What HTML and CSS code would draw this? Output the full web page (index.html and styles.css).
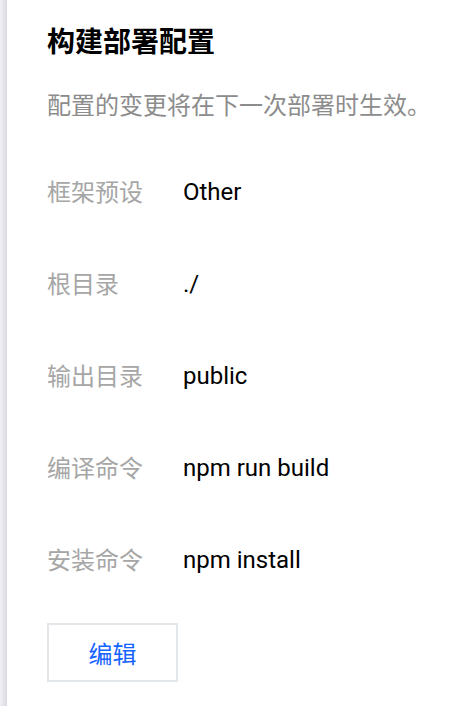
FILE: index.html
```html
<!DOCTYPE html>
<html lang="zh-CN">
<head>
    <meta charset="UTF-8">
    <meta name="viewport" content="width=device-width, initial-scale=1.0">
    <title>构建部署配置</title>
    <link rel="stylesheet" href="styles.css">
</head>
<body>
    <div class="layout">
        <div class="edge"></div>
        <div class="panel">
            <h1>构建部署配置</h1>
            <p class="desc">配置的变更将在下一次部署时生效。</p>

            <div class="config-list">
                <div class="config-row">
                    <div class="config-label">框架预设</div>
                    <div class="config-value">Other</div>
                </div>
                <div class="config-row">
                    <div class="config-label">根目录</div>
                    <div class="config-value">./</div>
                </div>
                <div class="config-row">
                    <div class="config-label">输出目录</div>
                    <div class="config-value">public</div>
                </div>
                <div class="config-row">
                    <div class="config-label">编译命令</div>
                    <div class="config-value">npm run build</div>
                </div>
                <div class="config-row">
                    <div class="config-label">安装命令</div>
                    <div class="config-value">npm install</div>
                </div>
            </div>

            <button class="edit-btn">编辑</button>
        </div>
    </div>
</body>
</html>
```

FILE: styles.css
```css
body {
    font-family: Roboto, "Noto Sans CJK SC", sans-serif;
    margin: 0;
    padding: 0;
    background-color: #fff;
    color: #000;
}
.layout {
    display: flex;
    min-height: 706px;
}
.edge {
    width: 7px;
    flex-shrink: 0;
    background: linear-gradient(to right, #f0f0f5, #d9d9e1);
}
.panel {
    flex: 1;
    padding: 23px 0 0 40px;
}
h1 {
    margin: 0;
    font-size: 28px;
    line-height: 40px;
    font-weight: bold;
    color: #000;
}
.desc {
    margin: 23px 0 0;
    font-size: 24px;
    line-height: 40px;
    color: #8c8c8c;
}
.config-list {
    margin-top: 20px;
}
.config-row {
    display: flex;
    align-items: center;
    height: 92px;
    font-size: 24px;
}
.config-label {
    width: 136px;
    color: #a6a6a6;
    margin-bottom: 3px;
}
.config-value {
    color: #000;
}
.edit-btn {
    margin-top: 17px;
    width: 131px;
    height: 59px;
    border: 2px solid #e3e6eb;
    background-color: #fff;
    color: #1664ff;
    font-family: inherit;
    font-size: 24px;
    padding: 0;
    cursor: pointer;
}
```
